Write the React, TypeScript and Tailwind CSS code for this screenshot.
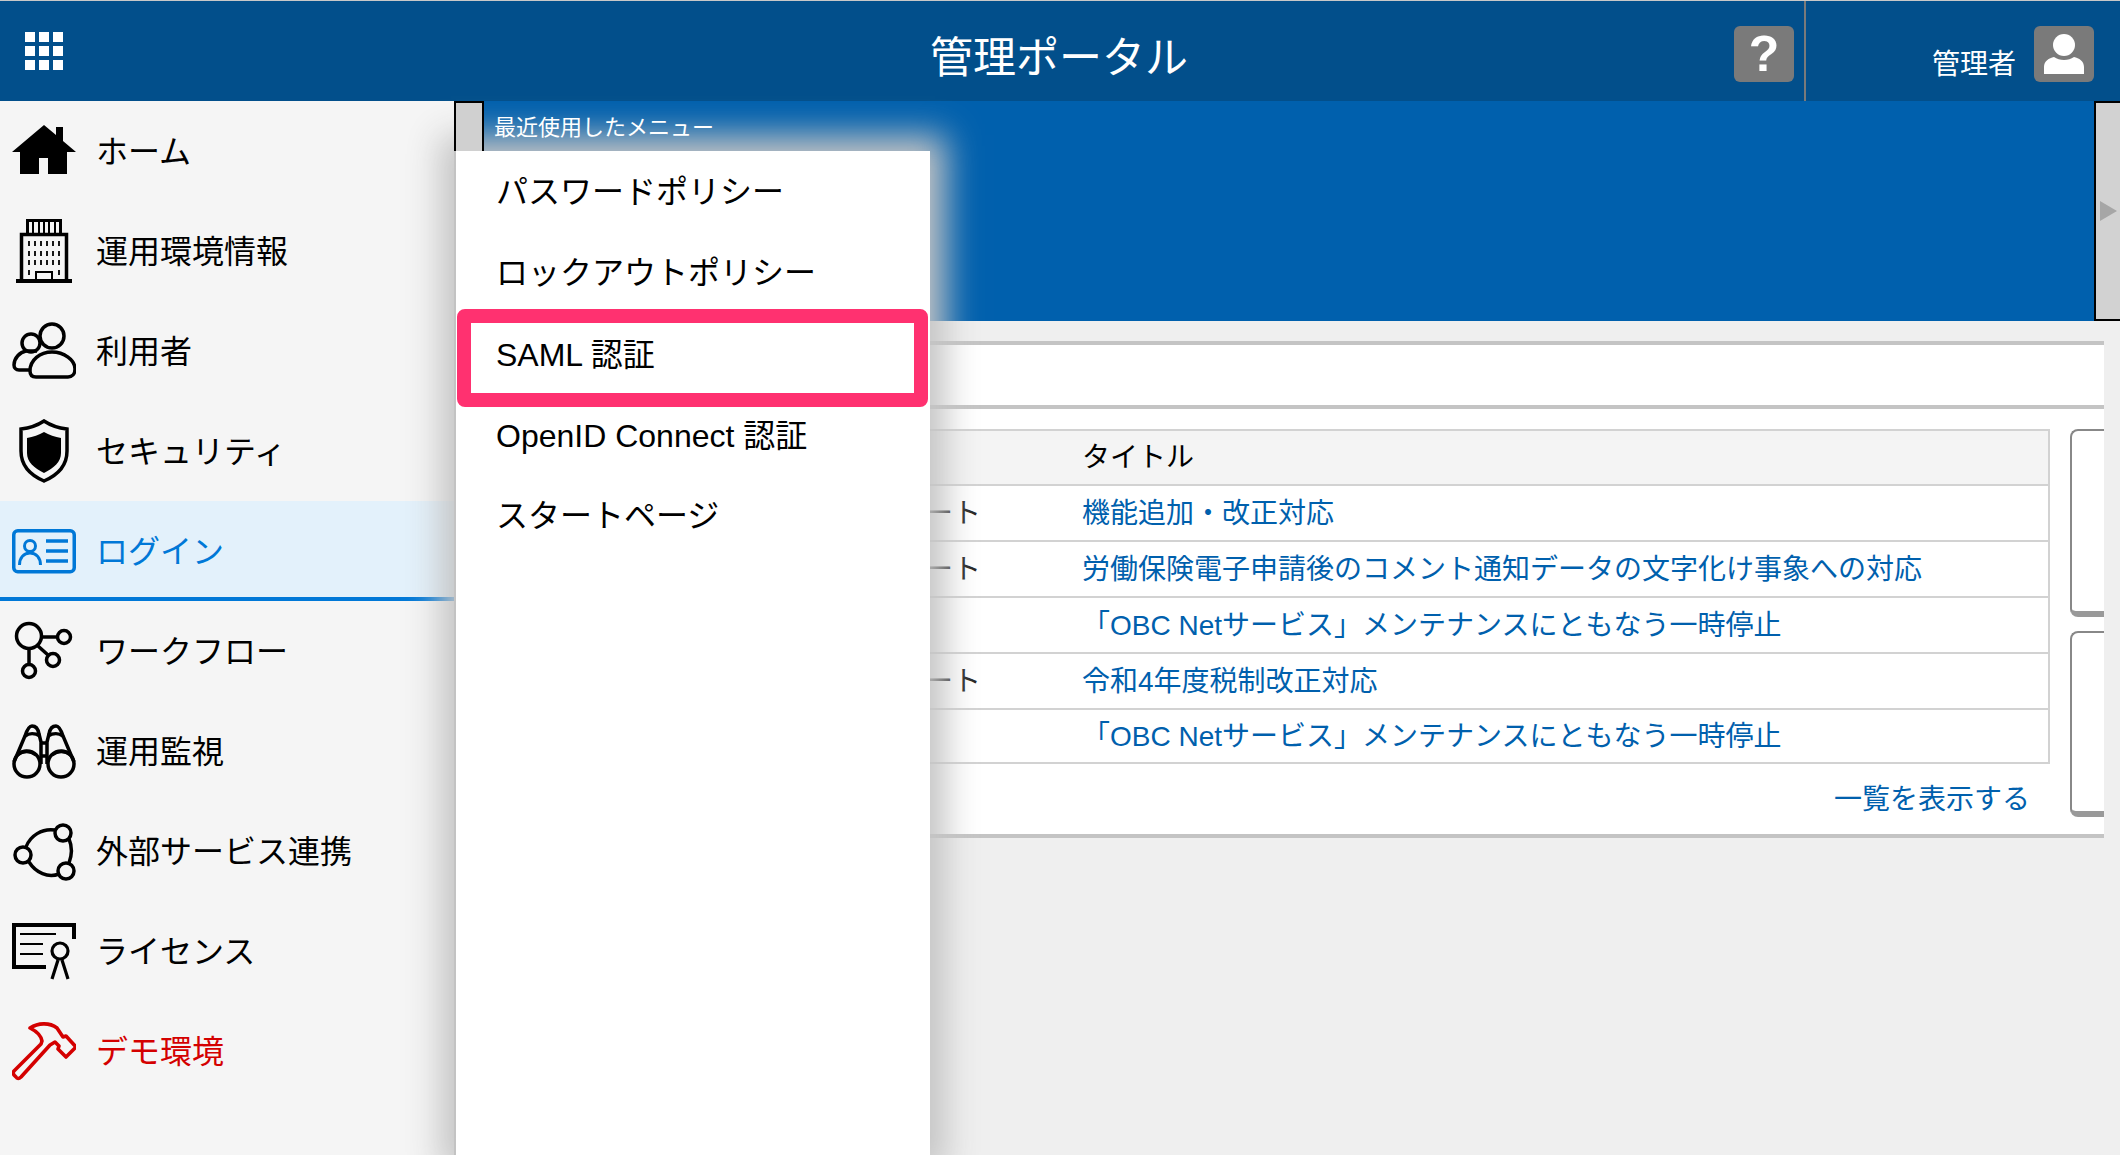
import type { ReactNode } from "react";

const font = "font-['Liberation_Sans','Noto_Sans_CJK_JP',sans-serif]";

const icons: Record<string, ReactNode> = {
  home: <path fill="currentColor" d="M0 33 32 6l12 10V8h7v14l13 11h-9v22H36V39h-9v16H8V33z" />,
  building: (
    <g fill="none" stroke="currentColor">
      <path strokeWidth="4" d="M4 62h56" />
      <path strokeWidth="3.5" d="M9.5 60V15.5h45V60" />
      <path strokeWidth="3" d="M15.500 14V1.500h33V14" />
      <path strokeWidth="2" d="M21 3v11M27 3v11M32 3v11M37 3v11M43 3v11" />
      <path strokeWidth="1.800" d="M17 22v5M23 22v5M29 22v5M35 22v5M41 22v5M47 22v5M17 32v5M23 32v5M29 32v5M35 32v5M41 32v5M47 32v5M17 41v5M23 41v5M29 41v5M35 41v5M41 41v5M47 41v5M17 51v5M47 51v5" />
      <path strokeWidth="2" d="M24 60v-7h16v7" />
    </g>
  ),
  users: (
    <g fill="none" stroke="currentColor" strokeWidth="3.500">
      <circle cx="40" cy="17" r="12" />
      <circle cx="19" cy="24" r="9" />
      <path d="M18 52c0-11 10-19 22-19s23 8 23 17c0 5-3 8-7 8H24c-4 0-6-2-6-6z" />
      <path d="M18 51H7c-3 0-5-2-5-5 0-7 6-13 12-14h11" />
    </g>
  ),
  shield: (
    <g>
      <path fill="none" stroke="currentColor" strokeWidth="3.500" d="M32 2c6 4 14 7 23 8v22c0 14-9 24-23 30C18 56 9 46 9 32V10c9-1 17-4 23-8z" />
      <path fill="currentColor" d="M32 13c5 3 11 5 17 6v15c0 9-7 15-17 20-10-5-17-11-17-20V19c6-1 12-3 17-6z" />
    </g>
  ),
  login: (
    <g fill="none" stroke="currentColor">
      <rect x="1.750" y="11.750" width="60.500" height="41" rx="4" strokeWidth="3.500" />
      <circle cx="18" cy="27" r="5.500" strokeWidth="3" />
      <path strokeWidth="3" d="M7.500 46c0-7 4-12 10.500-12s10.500 5 10.500 12" />
      <path strokeWidth="3.500" d="M34 22h22M34 32h22M34 42h22" />
    </g>
  ),
  workflow: (
    <g fill="none" stroke="currentColor" strokeWidth="3.500">
      <circle cx="17" cy="17" r="12.500" />
      <circle cx="52" cy="18" r="6.500" />
      <circle cx="41" cy="41" r="6.500" />
      <circle cx="17" cy="52" r="6.500" />
      <path d="M30 18h15M26 27l10 9M17 30v15" />
    </g>
  ),
  binoculars: (
    <g fill="none" stroke="currentColor" strokeWidth="3.500">
      <circle cx="15" cy="45" r="13" />
      <circle cx="49" cy="45" r="13" />
      <path d="M2 43 13 17c2-6 4-10 7-10s6 2 7 8l2 8v22" />
      <path d="M62 43 51 17c-2-6-4-10-7-10s-6 2-7 8l-2 8v22" />
      <path d="M13 17c4-3 10-3 15 0M51 17c-4-3-10-3-15 0M5 36c7-5 14-4 19 0M59 36c-7-5-14-4-19 0M29 24h6M28 37h8" />
    </g>
  ),
  external: (
    <g fill="none" stroke="currentColor" strokeWidth="3.500">
      <circle cx="51" cy="14" r="8" />
      <circle cx="11" cy="36" r="8" />
      <circle cx="54" cy="52" r="8" />
      <path d="M43 11C30 9 18 17 14 28M57 20c3 7 3 16 0 24M17 43c7 11 19 16 30 12" />
    </g>
  ),
  license: (
    <g fill="none" stroke="currentColor">
      <path strokeWidth="4" d="M62 20V6H2v42h32" />
      <path strokeWidth="1.800" d="M8 15h36M8 25h23M8 35h23" />
      <circle cx="48" cy="32" r="8" strokeWidth="3.200" />
      <path strokeWidth="3.200" d="M46 41l-6 19M50 41l6 19" />
    </g>
  ),
  hammer: (
    <path fill="none" stroke="currentColor" strokeWidth="3.600" strokeLinejoin="round" d="M18 9c8-5 19-6 27 0l6 9 3-1 10 11-10 10-8-8 1-3-4-4-5 3L9 58c-2 2-4 2-5 0l-2-2c-1-2-1-3 0-4l27-27 1-3c-1-6-6-10-12-13z" />
  ),
};

const navItems = [
  { label: "ホーム", icon: "home" },
  { label: "運用環境情報", icon: "building" },
  { label: "利用者", icon: "users" },
  { label: "セキュリティ", icon: "shield" },
  { label: "ログイン", icon: "login", active: true },
  { label: "ワークフロー", icon: "workflow" },
  { label: "運用監視", icon: "binoculars" },
  { label: "外部サービス連携", icon: "external" },
  { label: "ライセンス", icon: "license" },
  { label: "デモ環境", icon: "hammer", demo: true },
];

const flyoutItems = ["パスワードポリシー", "ロックアウトポリシー", "SAML 認証", "OpenID Connect 認証", "スタートページ"];

const rows = [
  { kind: "ート", title: "機能追加・改正対応" },
  { kind: "ート", title: "労働保険電子申請後のコメント通知データの文字化け事象への対応" },
  { kind: "", title: "「OBC Netサービス」メンテナンスにともなう一時停止" },
  { kind: "ート", title: "令和4年度税制改正対応" },
  { kind: "", title: "「OBC Netサービス」メンテナンスにともなう一時停止" },
];

function NavRow({ label, icon, active, demo }: { label: string; icon: string; active?: boolean; demo?: boolean }) {
  const color = active ? "text-[#0078d7]" : demo ? "text-[#d40000]" : "text-black";
  return (
    <div className={`flex h-[100px] items-center pl-3 ${color} ${active ? "border-b-4 border-[#0078d7] bg-[#e3f1fb] pt-1" : ""}`}>
      <svg viewBox="0 0 64 64" className="h-16 w-16 shrink-0">
        {icons[icon]}
      </svg>
      <span className="ml-5 mt-px text-[32px] leading-none">{label}</span>
    </div>
  );
}

export default function App() {
  return (
    <div className={`flex h-screen w-full flex-col overflow-hidden bg-[#efefef] ${font}`}>
      <div className="h-px shrink-0 bg-[#c8c8c8]" />
      <header className="flex h-[100px] shrink-0 items-center bg-[#024f8b] text-white">
        <div className="grid w-[134px] grid-cols-[repeat(3,10px)] gap-1 pl-[25px]">
          {Array.from({ length: 9 }).map((_, i) => (
            <span key={i} className="h-[10px] w-[10px] bg-white" />
          ))}
        </div>
        <h1 className="mt-[14px] flex-1 pl-[250px] text-center text-[43px] font-normal leading-none">管理ポータル</h1>
        <div className="mt-[6px] flex h-[56px] w-[60px] items-center justify-center rounded-md bg-[#7a7a7a] text-[50px] font-bold leading-none">?</div>
        <div className="ml-[10px] h-full w-[2px] bg-[#7a7a7a]" />
        <span className="ml-[126px] mt-[28px] text-[28px] leading-none">管理者</span>
        <div className="ml-[18px] mr-[26px] mt-[6px] h-[56px] w-[60px] rounded-md bg-[#7a7a7a]">
          <svg viewBox="0 0 60 56" className="h-full w-full">
            <circle cx="30" cy="19" r="11" fill="white" />
            <path fill="white" d="M10 48V41c0-6 5-9 10-10 3 2 6 3 10 3s7-1 10-3c5 1 10 4 10 10v7z" />
          </svg>
        </div>
      </header>

      <div className="flex min-h-0 flex-1">
        <aside className="relative z-10 w-[456px] shrink-0 border-r-2 border-[#c0c0c0] bg-[#f5f5f5]">
          {navItems.map((item) => (
            <NavRow key={item.label} {...item} />
          ))}
        </aside>

        <main className="relative min-w-0 flex-1">
          <div className="flex h-[220px]">
            <div className="relative flex-1 bg-[#0060ad]">
              <span className="relative z-30 ml-[38px] mt-4 block text-[22px] leading-[22px] text-white">最近使用したメニュー</span>
            </div>
            <div className="flex w-[26px] items-center border-y-2 border-l-2 border-black bg-[#d2d2d2] pl-1">
              <span className="h-0 w-0 border-y-[10px] border-l-[17px] border-y-transparent border-l-[#a6a6a6]" />
            </div>
          </div>

          {/* tab handle over the blue band */}
          <div className="absolute -left-[2px] top-0 z-30 h-[50px] w-[30px] border-x-2 border-t-2 border-black bg-[#d0d0d0]" />

          <section className="mr-4 mt-5 border-y-4 border-[#c4c4c4] bg-white">
            <div className="box-content h-[60px] border-b-4 border-[#c4c4c4]" />
            <div className="flex pl-[10px] pt-5">
              <div className="flex-1">
                <table className="w-full table-fixed border-collapse border-2 border-[#d2d2d2] text-[28px] leading-none">
                  <thead>
                    <tr className="h-[55px] bg-[#f4f4f4]">
                      <th className="w-[615px]" />
                      <th className="text-left font-normal">タイトル</th>
                    </tr>
                  </thead>
                  <tbody>
                    {rows.map((row, i) => (
                      <tr key={i} className={`border-t-2 border-[#d2d2d2] ${i === 4 ? "h-[54px]" : "h-[56px]"}`}>
                        <td className="pr-[101px] pt-[2px] text-right text-[#222]">{row.kind}</td>
                        <td className="pt-[2px] text-[#0060ad]">{row.title}</td>
                      </tr>
                    ))}
                  </tbody>
                </table>
                <div className="flex h-[70px] items-center justify-end pr-5 pt-[2px] text-[28px] text-[#0060ad]">一覧を表示する</div>
              </div>
              <div className="ml-5 flex w-[34px] flex-col gap-[14px]">
                <div className="h-[188px] rounded-l-lg border-b-[6px] border-l-2 border-t-2 border-b-[#999999] border-l-[#888888] border-t-[#888888]" />
                <div className="h-[186px] rounded-l-lg border-b-[6px] border-l-2 border-t-2 border-b-[#999999] border-l-[#888888] border-t-[#888888]" />
              </div>
            </div>
          </section>

          {/* flyout menu */}
          <div className="absolute bottom-0 left-0 top-[50px] z-20 w-[474px] bg-white shadow-[0_0_32px_16px_#c4c4c4]">
            {flyoutItems.map((item, i) => (
              <div key={item} className={`relative flex h-[81px] items-center pl-10 text-[32px] leading-none text-black ${i === 2 || i === 3 ? "pt-[2px]" : ""}`}>
                {i === 2 && (
                  <div className="absolute -bottom-[13px] -top-[4px] left-[1px] right-[2px] rounded-lg border-[14px] border-[#ff3170]" />
                )}
                <span className="relative">{item}</span>
              </div>
            ))}
          </div>
        </main>
      </div>
    </div>
  );
}
